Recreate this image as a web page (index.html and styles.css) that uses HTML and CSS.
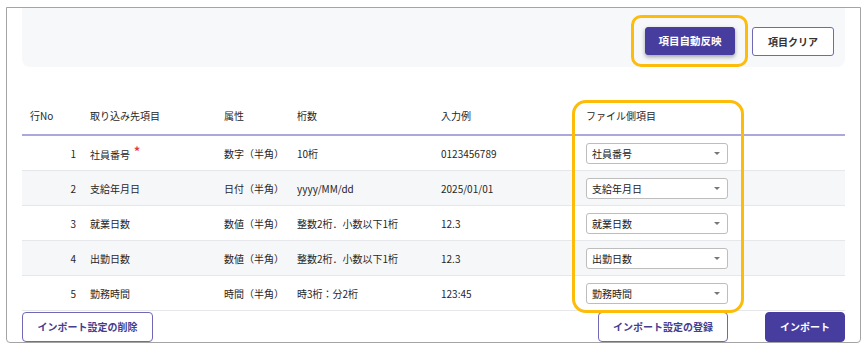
FILE: index.html
```html
<!DOCTYPE html>
<html lang="ja">
<head>
<meta charset="utf-8">
<link rel="stylesheet" href="styles.css">
</head>
<body>
<div class="frame">
  <div class="panel">
    <button class="btn btn-primary btn-raised">項目自動反映</button>
    <button class="btn btn-outline">項目クリア</button>
  </div>
  <div class="table">
    <div class="row head">
      <div class="c1 left">行No</div>
      <div class="c2">取り込み先項目</div>
      <div class="c3">属性</div>
      <div class="c4">桁数</div>
      <div class="c5">入力例</div>
      <div class="c6">ファイル側項目</div>
    </div>
    <div class="row">
      <div class="c1">1</div>
      <div class="c2">社員番号<span class="req">*</span></div>
      <div class="c3">数字（半角）</div>
      <div class="c4">10桁</div>
      <div class="c5">0123456789</div>
      <div class="c6"><div class="select">社員番号<span class="caret"></span></div></div>
    </div>
    <div class="row alt">
      <div class="c1">2</div>
      <div class="c2">支給年月日</div>
      <div class="c3">日付（半角）</div>
      <div class="c4">yyyy/MM/dd</div>
      <div class="c5">2025/01/01</div>
      <div class="c6"><div class="select">支給年月日<span class="caret"></span></div></div>
    </div>
    <div class="row">
      <div class="c1">3</div>
      <div class="c2">就業日数</div>
      <div class="c3">数値（半角）</div>
      <div class="c4">整数2桁．小数以下1桁</div>
      <div class="c5">12.3</div>
      <div class="c6"><div class="select">就業日数<span class="caret"></span></div></div>
    </div>
    <div class="row alt">
      <div class="c1">4</div>
      <div class="c2">出勤日数</div>
      <div class="c3">数値（半角）</div>
      <div class="c4">整数2桁．小数以下1桁</div>
      <div class="c5">12.3</div>
      <div class="c6"><div class="select">出勤日数<span class="caret"></span></div></div>
    </div>
    <div class="row">
      <div class="c1">5</div>
      <div class="c2">勤務時間</div>
      <div class="c3">時間（半角）</div>
      <div class="c4">時3桁：分2桁</div>
      <div class="c5">123:45</div>
      <div class="c6"><div class="select">勤務時間<span class="caret"></span></div></div>
    </div>
  </div>
  <div class="footer">
    <button class="btn btn-outline btn-footer">インポート設定の削除</button>
    <div class="footer-right">
      <button class="btn btn-outline btn-footer">インポート設定の登録</button>
      <button class="btn btn-primary btn-footer">インポート</button>
    </div>
  </div>
</div>
<div class="mark mark-btn"></div>
<div class="mark mark-col"></div>
</body>
</html>
```
FILE: styles.css
```css
* { box-sizing: border-box; }
html, body { margin: 0; padding: 0; background: #fff; }
body {
  font-family: "Noto Sans CJK JP", "Noto Sans", sans-serif;
  font-size: 10px;
  color: #262626;
  width: 867px;
  height: 351px;
  overflow: hidden;
  position: relative;
}
.frame {
  margin: 7px 0 0 6px;
  width: 855px;
  height: 336px;
  border: 1px solid #a4a4a4;
  border-radius: 0 0 4px 4px;
  padding: 0 15px;
  overflow: hidden;
}
.panel {
  height: 59px;
  background: #f7f8fa;
  border-radius: 0 0 8px 8px;
  display: flex;
  justify-content: flex-end;
  align-items: flex-start;
  gap: 17px;
  padding: 19px 11px 0 0;
}
.btn {
  font-family: inherit;
  font-size: 10px;
  font-weight: 700;
  height: 29px;
  padding: 0 15px;
  border-radius: 3px;
  cursor: pointer;
  line-height: 1;
}
.btn-primary {
  background: #463d9f;
  border: 1px solid #463d9f;
  color: #fff;
}
.btn-raised {
  box-shadow: 0 2px 4px rgba(0,0,0,0.35);
  height: 28px;
  width: 90px;
  padding: 0;
  font-size: 10.5px;
}
.btn-outline {
  background: #fff;
  border: 1px solid #6f68b5;
  color: #333;
}
.table { margin-top: 30px; }
.row {
  display: grid;
  grid-template-columns: 60px 134px 73px 144px 145px 1fr;
  align-items: center;
  height: 35px;
  border-bottom: 1px solid #e6e7eb;
}
.row > div { padding-left: 8px; white-space: nowrap; }
.row.head {
  height: 39px;
  border-bottom: 2px solid #aca8dc;
}
.row.alt { background: #f6f7f9; }
.row .c1 { text-align: right; padding-right: 6px; padding-left: 0; }
.row .c1.left { text-align: left; padding-left: 8px; }
.req {
  color: #e53935;
  font-size: 12px;
  font-weight: 700;
  margin-left: 4px;
  position: relative;
  top: -3px;
}
.select {
  width: 142px;
  height: 21px;
  border: 1px solid #bdbdbd;
  border-radius: 3px;
  background: #fff;
  display: flex;
  align-items: center;
  justify-content: space-between;
  padding: 0 7px 0 5px;
  color: #222;
}
.caret {
  width: 0;
  height: 0;
  border-left: 3px solid transparent;
  border-right: 3px solid transparent;
  border-top: 3.5px solid #777;
}
.footer {
  margin-top: 1px;
  display: flex;
  justify-content: space-between;
}
.footer-right { display: flex; gap: 37px; }
.btn-footer {
  height: 30px;
  border-radius: 4px;
  color: #453d8f;
}
.btn-footer.btn-primary { color: #fff; width: 80px; padding: 0; }
.btn-outline.btn-footer { width: 131px; padding: 0; }
.footer-right .btn-outline.btn-footer { width: 130px; }
.mark {
  position: absolute;
  border: 3px solid #fcbc09;
  pointer-events: none;
}
.mark-btn {
  left: 631px;
  top: 15px;
  width: 117px;
  height: 52px;
  border-radius: 10px;
}
.mark-col {
  left: 572px;
  top: 100px;
  width: 172px;
  height: 213px;
  border-radius: 14px;
}
```
